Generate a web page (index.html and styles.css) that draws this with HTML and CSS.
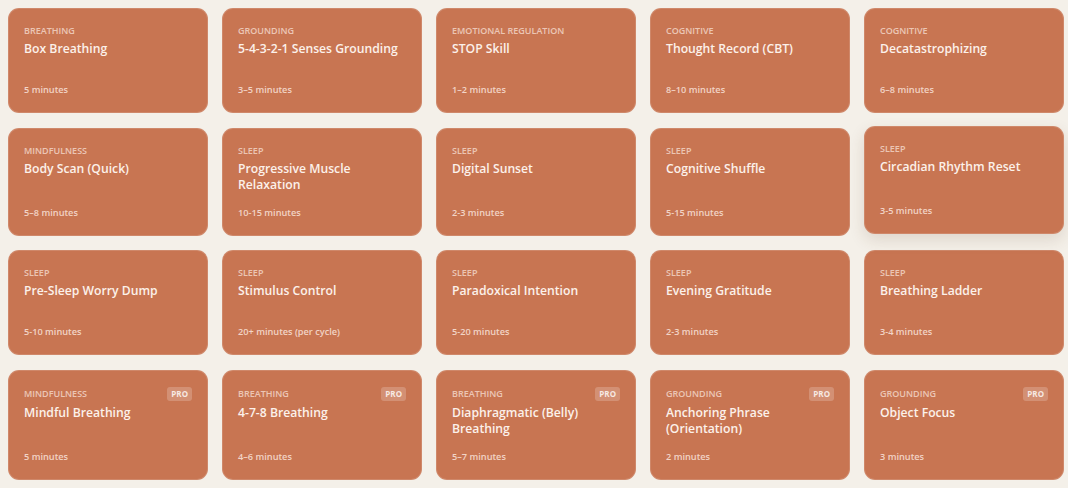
FILE: index.html
```html
<!DOCTYPE html>
<html lang="en">
<head>
<meta charset="utf-8">
<title>Exercises</title>
<link rel="stylesheet" href="styles.css">
</head>
<body>
<main class="grid">
  <article class="card"><div class="card-head"><span class="cat">Breathing</span></div><h3 class="title">Box Breathing</h3><p class="dur">5 minutes</p></article>
  <article class="card"><div class="card-head"><span class="cat">Grounding</span></div><h3 class="title">5-4-3-2-1 Senses Grounding</h3><p class="dur">3–5 minutes</p></article>
  <article class="card"><div class="card-head"><span class="cat">Emotional Regulation</span></div><h3 class="title">STOP Skill</h3><p class="dur">1–2 minutes</p></article>
  <article class="card"><div class="card-head"><span class="cat">Cognitive</span></div><h3 class="title">Thought Record (CBT)</h3><p class="dur">8–10 minutes</p></article>
  <article class="card"><div class="card-head"><span class="cat">Cognitive</span></div><h3 class="title">Decatastrophizing</h3><p class="dur">6–8 minutes</p></article>

  <article class="card"><div class="card-head"><span class="cat">Mindfulness</span></div><h3 class="title">Body Scan (Quick)</h3><p class="dur">5–8 minutes</p></article>
  <article class="card"><div class="card-head"><span class="cat">Sleep</span></div><h3 class="title">Progressive Muscle Relaxation</h3><p class="dur">10-15 minutes</p></article>
  <article class="card"><div class="card-head"><span class="cat">Sleep</span></div><h3 class="title">Digital Sunset</h3><p class="dur">2-3 minutes</p></article>
  <article class="card"><div class="card-head"><span class="cat">Sleep</span></div><h3 class="title">Cognitive Shuffle</h3><p class="dur">5-15 minutes</p></article>
  <article class="card is-hover"><div class="card-head"><span class="cat">Sleep</span></div><h3 class="title">Circadian Rhythm Reset</h3><p class="dur">3-5 minutes</p></article>

  <article class="card"><div class="card-head"><span class="cat">Sleep</span></div><h3 class="title">Pre-Sleep Worry Dump</h3><p class="dur">5-10 minutes</p></article>
  <article class="card"><div class="card-head"><span class="cat">Sleep</span></div><h3 class="title">Stimulus Control</h3><p class="dur">20+ minutes (per cycle)</p></article>
  <article class="card"><div class="card-head"><span class="cat">Sleep</span></div><h3 class="title">Paradoxical Intention</h3><p class="dur">5-20 minutes</p></article>
  <article class="card"><div class="card-head"><span class="cat">Sleep</span></div><h3 class="title">Evening Gratitude</h3><p class="dur">2-3 minutes</p></article>
  <article class="card"><div class="card-head"><span class="cat">Sleep</span></div><h3 class="title">Breathing Ladder</h3><p class="dur">3-4 minutes</p></article>

  <article class="card is-pro"><div class="card-head"><span class="cat">Mindfulness</span><span class="pro">PRO</span></div><h3 class="title">Mindful Breathing</h3><p class="dur">5 minutes</p></article>
  <article class="card is-pro"><div class="card-head"><span class="cat">Breathing</span><span class="pro">PRO</span></div><h3 class="title">4-7-8 Breathing</h3><p class="dur">4–6 minutes</p></article>
  <article class="card is-pro"><div class="card-head"><span class="cat">Breathing</span><span class="pro">PRO</span></div><h3 class="title">Diaphragmatic (Belly) Breathing</h3><p class="dur">5–7 minutes</p></article>
  <article class="card is-pro"><div class="card-head"><span class="cat">Grounding</span><span class="pro">PRO</span></div><h3 class="title">Anchoring Phrase (Orientation)</h3><p class="dur">2 minutes</p></article>
  <article class="card is-pro"><div class="card-head"><span class="cat">Grounding</span><span class="pro">PRO</span></div><h3 class="title">Object Focus</h3><p class="dur">3 minutes</p></article>
</main>
</body>
</html>
```

FILE: styles.css
```css
* { box-sizing: border-box; }

html, body {
  margin: 0;
  padding: 0;
  background: #f4f0e9;
  font-family: "Open Sans", "Noto Sans", sans-serif;
}

.grid {
  display: grid;
  grid-template-columns: repeat(5, 200px);
  column-gap: 14px;
  row-gap: 14.6px;
  padding: 8px;
}

.card {
  display: flex;
  flex-direction: column;
  min-height: 105px;
  padding: 16px 15px 14px 15px;
  background: #c87552;
  border: 1px solid rgba(255, 255, 255, 0.14);
  border-radius: 11px;
  color: #fff;
}

.card.is-hover {
  transform: translateY(-2px);
  box-shadow: 0 6px 16px rgba(90, 60, 30, 0.14);
}

.card-head {
  display: flex;
  align-items: center;
  justify-content: space-between;
  min-height: 12px;
}

.cat {
  font-size: 9px;
  line-height: 12px;
  font-weight: 600;
  text-transform: uppercase;
  color: rgba(255, 240, 232, 0.68);
}

.pro {
  height: 14px;
  padding: 0 4px;
  border-radius: 3px;
  background: rgba(255, 255, 255, 0.2);
  font-size: 8px;
  line-height: 14px;
  font-weight: 700;
  color: rgba(255, 255, 255, 0.82);
}

.title {
  margin: 4px 0 0 0;
  font-size: 12.2px;
  line-height: 16px;
  font-weight: 600;
  color: #fcf1ea;
}

.is-pro .title {
  padding-right: 30px;
}

.dur {
  margin: auto 0 0 0;
  padding-top: 12px;
  font-size: 9.2px;
  line-height: 16px;
  font-weight: 600;
  color: rgba(255, 240, 232, 0.78);
}
```
